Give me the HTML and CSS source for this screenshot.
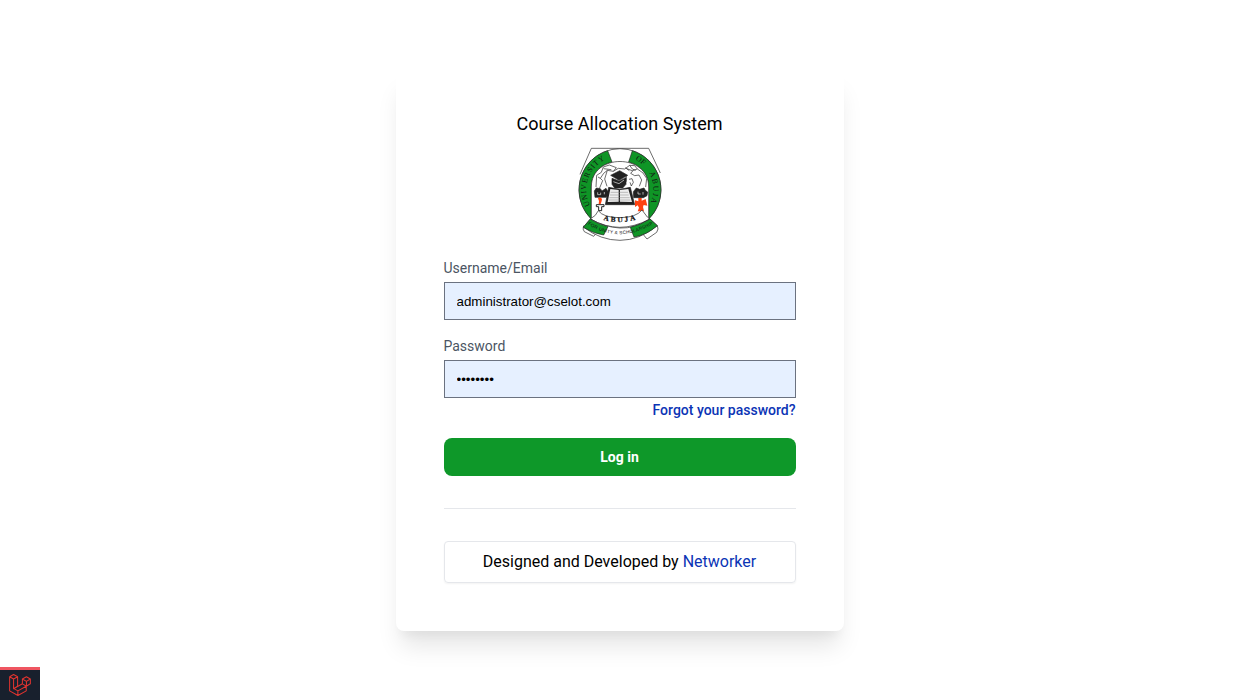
FILE: index.html
```html
<!DOCTYPE html>
<html lang="en">
<head>
<meta charset="utf-8">
<title>Course Allocation System</title>
<link rel="stylesheet" href="styles.css">
</head>
<body>
<main class="page">
  <section class="card">
    <h1 class="title">Course Allocation System</h1>
    <svg class="crest" viewBox="24 22 252 282" fill="none" stroke="#222" stroke-width="2">
      <defs>
        <path id="arc-left" d="M60 197A100 100 0 0 1 122 54"/>
        <path id="arc-right" d="M196 60A100 100 0 0 1 238 197"/>
        <path id="arc-name" d="M100 241Q150 255 206 238"/>
        <path id="arc-motto" d="M53 254Q148 314 252 252"/>
      </defs>
      <path d="M30 104L64 26H236L271 100" fill="#fff"/>
      <path d="M64 238A123 123 0 1 1 236 238Z" fill="#fff"/>
      <path d="M64 238A123 123 0 0 1 113 33L126 67C87 77 64 106 64 142Z" fill="#0f9526"/>
      <path d="M187 33A123 123 0 0 1 236 238V142C236 106 213 77 176 67Z" fill="#0f9526"/>
      <path d="M64 238V142C64 40 236 40 236 142V238" fill="#fff"/>
      <path d="M78 142L80 107L94 98L100 82L118 76L139 84L130 95L112 92L101 101L91 116L98 123L88 147M112 92L104 118L111 140M101 87L124 90M130 95L145 86L164 88L179 77L194 78L202 88L218 99L230 116L227 142M170 87L187 93L202 88M189 93L182 101L194 108L207 106L215 121L208 140M177 119L186 117L190 128L184 139L180 128M84 112L91 116M179 77L187 88L197 92M166 84L178 93"/>
      <g fill="#222" stroke="#222">
        <path d="M122 107L149 93L173 107L147 122Z"/>
        <path d="M126 116L147 124L168 114V134L158 145H134L126 134Z"/>
        <path d="M73 154L79 145L91 147L96 154L108 146L115 158V167L108 173H75Z"/>
        <path d="M190 156L199 145L209 149L222 145L226 152L233 157L231 168L220 174H191Z"/>
        <path d="M116 143L106 195H194L181 143L149 149Z"/>
      </g>
      <path d="M121 148L113 187L146 186V151ZM150 151V186L186 187L175 148Z" fill="#eee" stroke="none"/>
      <path d="M122 158H174M120 166H176M118 174H179M116 181H181" stroke="#888" stroke-width="1.5"/>
      <path d="M130 126L147 132L162 121M83 158V165H92V159M103 157V164M204 156V163H212M219 157V165" stroke="#eee"/>
      <path d="M169 107V126"/>
      <path d="M84 176L89 173L96 177L95 184L92 193H86L87 184Z" fill="#ff4210" stroke="none"/>
      <path d="M79 195H102V201H95V213H86V201H79Z" fill="#fff" stroke-width="3"/>
      <path d="M205 175H215V183L227 178L232 198L221 196L219 202L222 215L203 215L207 204L203 197L195 202V182L205 185Z" fill="#ff4210" stroke="none"/>
      <path d="M85 213Q100 234 149 234T216 211L232 232Q238 239 240 238Q192 263 149 263T61 238Q79 228 85 213Z" fill="#fff"/>
      <path d="M41 258Q37 270 43 276L71 290L80 279M262 258Q267 268 260 278L231 298L220 285" fill="#fff"/>
      <path d="M61 238Q105 263 150 265T240 238L262 258Q208 302 150 302T40 262Z" fill="#fff"/>
      <path d="M61 238Q84 254 114 261L101 286Q70 282 40 263ZM240 238Q214 255 181 263L192 292Q228 287 262 258Z" fill="#0f9526"/>
      <g class="crest-text">
        <text font-size="23"><textPath href="#arc-left" textLength="160">UNIVERSITY</textPath></text>
        <text font-size="23"><textPath href="#arc-right">OF</textPath></text>
        <text font-size="23"><textPath href="#arc-right" startOffset="58" textLength="92">ABUJA</textPath></text>
        <text font-size="22" font-weight="700" stroke="#111" stroke-width=".7"><textPath href="#arc-name" textLength="98">ABUJA</textPath></text>
        <text class="motto" font-size="14"><textPath href="#arc-motto" textLength="208">FOR UNITY &amp; SCHOLARSHIP</textPath></text>
      </g>
    </svg>
    <form class="form">
      <label class="label" for="email">Username/Email</label>
      <input class="field" id="email" type="text" value="administrator@cselot.com">
      <label class="label label-next" for="password">Password</label>
      <input class="field" id="password" type="password" value="password">
      <a class="forgot">Forgot your password?</a>
      <button class="submit" type="button">Log in</button>
    </form>
    <hr class="rule">
    <div class="credit">Designed and Developed by <a class="link">Networker</a></div>
  </section>
</main>
<div class="debugbar">
  <svg class="laravel" viewBox="0 0 24 24" fill="none" stroke="#e3342f" stroke-width="1.1" stroke-linejoin="round">
    <path d="M.7 3L5 .5L9.4 3V13.4L5 16V5.5L.7 3V18.4L9.7 23.5L18.8 18.4V13.3L23.3 10.7V5.5L19 3L14.6 5.5V10.7L5.4 16L9.7 18.4L18.8 13.3L14.6 10.7M5 5.5L9.4 3M14.6 5.5L19 8L23.3 5.5M19 8V13.2M9.7 18.4V23.5"/>
  </svg>
</div>
</body>
</html>
```

FILE: styles.css
```css
* { box-sizing: border-box; }

body {
  margin: 0;
  background: #fff;
  color: #000;
  font-family: Roboto, "Liberation Sans", sans-serif;
}

.page {
  display: flex;
  align-items: center;
  justify-content: center;
  height: 700px;
}

.card {
  display: flex;
  flex-direction: column;
  width: 448px;
  height: 562px;
  padding: 41px 48px 48px;
  border-radius: 8px;
  background: #fff;
  box-shadow: 0 20px 25px -5px rgba(0, 0, 0, .1), 0 10px 10px -5px rgba(0, 0, 0, .04);
}

.title {
  margin: 0;
  font-size: 18px;
  font-weight: 400;
  line-height: 28px;
  text-align: center;
}

.crest {
  flex: none;
  align-self: center;
  width: 84px;
  height: 94px;
  margin: 9px 0 0 1px;
}

.crest-text {
  fill: #111;
  stroke: none;
  font-family: "Liberation Serif", serif;
}

.motto { font-family: "Liberation Sans", sans-serif; }

.form {
  display: flex;
  flex-direction: column;
  margin-top: 17px;
}

.label {
  color: #4b5563;
  font-size: 14px;
  line-height: 20px;
}

.label-next { margin-top: 16px; }

.field {
  width: 100%;
  height: 38px;
  margin: 4px 0 0;
  padding: 0 12px;
  border: 1px solid #6b7280;
  border-radius: 0;
  outline: 0;
  background: #e6f0ff;
  color: #000;
  font: 13.333px "Liberation Sans", sans-serif;
}

.forgot {
  align-self: flex-end;
  margin-top: 2px;
  color: #0b34b5;
  font-size: 14px;
  font-weight: 500;
  line-height: 20px;
}

.submit {
  height: 38px;
  margin-top: 18px;
  padding: 0;
  border: 0;
  border-radius: 8px;
  background: #0e9829;
  color: #fff;
  font: 700 14px/20px Roboto, sans-serif;
}

.rule {
  width: 100%;
  margin: 32px 0;
  border: 0;
  border-top: 1px solid #e5e7eb;
}

.credit {
  height: 42px;
  border: 1px solid #e5e7eb;
  border-radius: 4px;
  box-shadow: 0 1px 2px rgba(0, 0, 0, .05);
  font-size: 16px;
  line-height: 39px;
  text-align: center;
}

.link { color: #0b34b5; }

.debugbar {
  position: fixed;
  bottom: 0;
  left: 0;
  display: flex;
  justify-content: center;
  width: 40px;
  height: 33px;
  padding-top: 4px;
  border-top: 3px solid #ef5661;
  background: #18202d;
}

.laravel {
  width: 22px;
  height: 22px;
}
```
